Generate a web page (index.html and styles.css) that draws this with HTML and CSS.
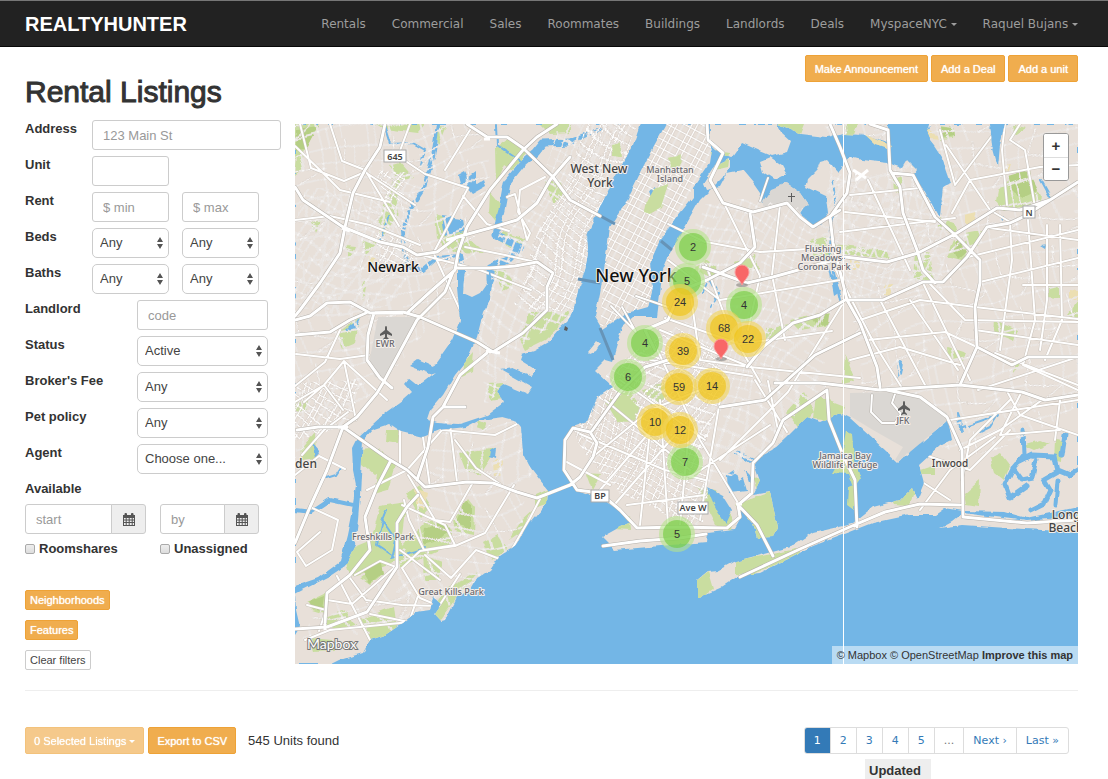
FILE: index.html
```html
<!DOCTYPE html>
<html lang="en">
<head>
<meta charset="utf-8">
<title>Rental Listings | RealtyHunter</title>
<link rel="stylesheet" href="styles.css">
</head>
<body>
<header class="navbar">
  <a class="brand" href="#">REALTYHUNTER</a>
  <nav class="nav">
    <a href="#">Rentals</a>
    <a href="#">Commercial</a>
    <a href="#">Sales</a>
    <a href="#">Roommates</a>
    <a href="#">Buildings</a>
    <a href="#">Landlords</a>
    <a href="#">Deals</a>
    <a href="#">MyspaceNYC <span class="caret"></span></a>
    <a href="#">Raquel Bujans <span class="caret"></span></a>
  </nav>
</header>

<main class="page">
  <div class="page-head">
    <h1>Rental Listings</h1>
    <div class="actions">
      <button class="btn" type="button">Make Announcement</button>
      <button class="btn" type="button">Add a Deal</button>
      <button class="btn" type="button">Add a unit</button>
    </div>
  </div>

  <div class="content">
    <form class="filters">
      <div class="row"><label for="address">Address</label><input class="field wide" id="address" type="text" placeholder="123 Main St"></div>
      <div class="row"><label for="unit">Unit</label><input class="field" id="unit" type="text"></div>
      <div class="row"><label for="rent-min">Rent</label><input class="field" id="rent-min" type="text" placeholder="$ min"><input class="field" type="text" placeholder="$ max" aria-label="Maximum rent"></div>
      <div class="row"><label for="beds">Beds</label><select class="field" id="beds"><option>Any</option></select><select class="field" aria-label="Maximum beds"><option>Any</option></select></div>
      <div class="row"><label for="baths">Baths</label><select class="field" id="baths"><option>Any</option></select><select class="field" aria-label="Maximum baths"><option>Any</option></select></div>
      <div class="row long"><label for="landlord">Landlord</label><input class="field" id="landlord" type="text" placeholder="code"></div>
      <div class="row long"><label for="status">Status</label><select class="field" id="status"><option>Active</option></select></div>
      <div class="row long"><label for="fee">Broker's Fee</label><select class="field" id="fee"><option>Any</option></select></div>
      <div class="row long"><label for="pets">Pet policy</label><select class="field" id="pets"><option>Any</option></select></div>
      <div class="row long"><label for="agent">Agent</label><select class="field" id="agent"><option>Choose one...</option></select></div>
      <div class="row"><label for="start">Available</label></div>
      <div class="dates">
        <div class="date">
          <input class="field" id="start" type="text" placeholder="start">
          <button class="addon" type="button" aria-label="Pick start date"><svg width="12" height="13" viewBox="0 0 12 13"><path fill="#555" fill-rule="evenodd" d="M0 2h1.500V1c0-1.300 2.500-1.300 2.500 0v1h4V1c0-1.300 2.500-1.300 2.500 0v1H12v11H0zM1 5v1.500h1.700V5zm2.700 0v1.500h2V5zm3 0v1.500h2V5zm3 0v1.500H11V5zM1 7.500V9h1.700V7.500zm2.700 0V9h2V7.500zm3 0V9h2V7.500zm3 0V9H11V7.500zM1 10v2h1.700v-2zm2.700 0v2h2v-2zm3 0v2h2v-2zm3 0v2H11v-2z"/></svg></button>
        </div>
        <div class="date">
          <input class="field" type="text" placeholder="by" aria-label="Available by">
          <button class="addon" type="button" aria-label="Pick end date"><svg width="12" height="13" viewBox="0 0 12 13"><path fill="#555" fill-rule="evenodd" d="M0 2h1.500V1c0-1.300 2.500-1.300 2.500 0v1h4V1c0-1.300 2.500-1.300 2.500 0v1H12v11H0zM1 5v1.500h1.700V5zm2.700 0v1.500h2V5zm3 0v1.500h2V5zm3 0v1.500H11V5zM1 7.500V9h1.700V7.500zm2.700 0V9h2V7.500zm3 0V9h2V7.500zm3 0V9H11V7.500zM1 10v2h1.700v-2zm2.700 0v2h2v-2zm3 0v2h2v-2zm3 0v2H11v-2z"/></svg></button>
        </div>
        <label class="check"><input type="checkbox">Roomshares</label>
        <label class="check"><input type="checkbox">Unassigned</label>
      </div>
      <div class="filter-buttons">
        <button class="btn small" type="button">Neighborhoods</button>
        <button class="btn small" type="button">Features</button>
        <button class="btn small plain" type="reset">Clear filters</button>
      </div>
    </form>

    <section class="map" aria-label="Map of listings">
      <svg class="map-canvas" viewBox="295 124 783 540" preserveAspectRatio="xMidYMid slice">
        <defs>
          <path id="land" d="M295 124H640L633 145 628 153 610 187 597 213 587 233 588 253 585 270 578 290 573 312 567 322 558 330 548 342 534 350 522 354 520 360 536 370 532 376 512 368 500 370 532 388 528 394 504 384 497 390 503 403 487 415 460 424 437 423 428 420 432 408 443 395 455 375 467 360 477 337 483 313 490 300 492 285 490 268 487 283 480 293 472 297 463 293 465 267 457 267 457 287 460 320 452 340 433 367 418 360 410 366 430 374 436 372 418 386 408 378 404 383 412 392 403 400 385 413 372 425 356 440 352 448 353 470 356 485 352 510 347 535 340 562 318 578 295 586ZM363 440L372 430 390 424 402 432 423 437 440 430 467 427 480 420 503 417 514 420 521 428 523 453 530 467 540 480 548 490 547 503 530 523 516 545 500 556 490 570 477 578 470 590 457 597 453 605 445 620 440 621 434 614 441 604 433 597 430 610 416 612 403 623 385 635 370 640 363 653 356 655 340 660 332 664H295V635L300 627 296 610 295 594 330 576 345 566 355 545 358 520 360 495Z
          M666 124L650 153 627 200 610 227 605 263 600 293 595 317 602 329 627 313 648 307 653 287 650 263 660 240 677 217 693 197 693 188 710 163 712 150 707 137 705 124Z
          M708 124L710 145 716 151 732 157 742 143 760 151 772 156 787 152 791 141 780 131 776 124ZM730 158L714 166 703 183 706 190 720 187 730 168ZM760 161L770 157 782 165 787 174 775 180 763 172ZM777 124L800 134 826 137 845 134 865 135 888 142 888 124Z
          M700 200L716 184 727 173 742 170 753 183 760 193 763 203 770 203 785 183 800 193 807 203 800 213 813 227 823 224 829 214 827 197 806 187 808 179 817 170 820 162 827 160 838 172 850 157 862 160 887 163 902 168 907 160 917 170 913 176 925 192 937 213 940 217 943 187 951 183 942 157 934 145 930 140 928 124H990L992 145 998 167 1000 145 1005 124H1078V507L1027 518 1005 512 963 511 945 508 935 515 910 515 873 523 850 532 813 546 790 558 760 573 740 575 720 588 697 598V580L707 572 717 571 733 562 760 555 790 547 813 532 830 528 853 523 873 507 900 500 912 488 917 500 924 483 919 465 940 446 952 440 948 420 898 462 850 418 840 413 820 422 807 417 787 437 773 450 753 460 760 480 753 495 770 492 778 527 773 537 757 538 753 523 738 505 740 517 733 530 708 533 707 542 660 546 615 550 602 537 620 527 630 523 620 510 605 500 577 490 564 470 565 440 573 427 587 422 593 407 598 397 613 387 595 370 605 360 612 362 622 327 633 317 657 317 660 293 663 270 670 253 683 230Z
          M963 513L953 521 940 528 962 525 1007 528 1078 532V516L1027 521ZM587 352L597 340 601 343 596 351 589 354Z"/>
          <clipPath id="on-land"><use href="#land"/></clipPath>
          <filter id="coast" x="0" y="0" width="1" height="1"><feTurbulence type="fractalNoise" baseFrequency=".09" numOctaves="2" seed="4"/><feDisplacementMap in="SourceGraphic" scale="5" xChannelSelector="R" yChannelSelector="G"/><feGaussianBlur stdDeviation=".4"/></filter>
          <filter id="bend" x="-.1" y="-.1" width="1.200" height="1.200"><feTurbulence type="fractalNoise" baseFrequency=".011" numOctaves="1" seed="9"/><feDisplacementMap in="SourceGraphic" scale="60" xChannelSelector="R" yChannelSelector="G"/></filter>
          <path id="loose-net" fill="none" d="M0 8H62M0 24H38L62 30M0 30L12 30M0 43H62M9 0V54M25 8V43M40 0L36 24V54M52 8V29M18 43V54M18 0V8M48 43L62 36M0 36L9 30"/>
          <path id="mesh-net" fill="none" d="M0 6H26M0 17H26M0 27H18M5 0V32M13 6V27M20 0V32"/>
          <path id="grid-net" fill="none" d="M0 4.500H18M0 12.500H18M3.500 0V16M8.500 0V16M14 0V16"/>
          <pattern id="loose" width="62" height="54" patternUnits="userSpaceOnUse" patternTransform="rotate(-14)"><use href="#loose-net" class="net-case"/><use href="#loose-net" class="net-line"/></pattern>
          <pattern id="mesh" width="26" height="32" patternUnits="userSpaceOnUse" patternTransform="rotate(22)"><use href="#mesh-net" class="net-case"/><use href="#mesh-net" class="net-line"/></pattern>
          <pattern id="grid" width="18" height="16" patternUnits="userSpaceOnUse" patternTransform="rotate(28)"><use href="#grid-net" class="net-case"/><use href="#grid-net" class="net-line"/></pattern>
          <path id="roads" d="M557 124L537 137 523 150 490 190 467 227 458 253 455 270 430 292 407 313M453 272L445 292 417 320 383 383 377 393 357 417 343 427 327 470 310 507 295 543M295 320L310 316 327 303 350 302 370 313 403 312 420 317 477 342 493 352 523 333 547 310V287L553 273 537 262 515 266 490 268 455 268M295 187L303 200 343 227 380 242 403 247 417 255 437 252 457 237 490 228 517 220 537 203 550 180 570 157M385 124L380 147 365 170 353 193 345 227 340 253 320 283 300 310 295 316M467 124L487 137 507 137 523 148 553 177 570 200 600 216M295 335L330 332 350 320 366 313M374 313L368 335 367 360 380 378 392 388
          M295 629L327 627 367 612 397 567M397 567V523L407 507 418 495M325 623L327 593 350 575 370 550 365 517 377 487 390 462M343 427L387 458 407 470 425 487 467 482 493 483 517 492 537 498 570 485 580 477 593 457 597 443 590 432 573 428 565 440 564 470 577 490 600 493 620 510 637 528 677 527 727 528 740 517 738 505 752 493 753 463 773 443 783 420 827 390M417 480L428 447 433 417 443 407 460 375 487 353M443 407H465
          M297 430L318 427 343 427M592 431L620 392 645 367 668 360M707 124L708 140 723 153 710 180 723 203 753 212 787 203 800 217 813 227 840 210M750 213L755 247 740 263 707 280 680 291 668 320 645 330 655 350M703 267L747 283 773 277 845 257 887 262 918 253 957 233 997 208 1020 210 1050 200 1078 182M747 367L763 347 793 323 820 315 845 300 883 300 923 282 943 282 967 257 987 227 1010 223 1023 217 1050 200M830 124L840 147 850 173 847 193 830 217 833 243 847 300 860 323 877 367 880 387M870 124L888 130 890 170 900 187 903 213 917 250 923 270 935 283M892 173L913 175 935 217 953 233 980 260V283L975 307 977 347 960 385M977 347L1012 365 1028 357H1078M775 383L820 383 880 390 960 385 1022 392 1045 400 1078 395M887 390L920 397 947 417 962 450 963 517 1027 523 1078 520M827 390L829 420 843 455 855 480 857 527M740 577L800 549 852 526 885 512 920 504 960 505M738 505L757 525 773 556M603 546L640 541 680 538 706 534M720 407L765 400 815 355 860 333"/>
          <path id="streets" d="M295 146L320 170 340 190 390 202M295 220L330 216 370 225 420 245M300 124L311 168 344 181 365 172 415 205M330 124L342 161 365 170 399 226M410 124L398 156 425 174 468 188 435 250M445 170L470 130M463 196L487 224 509 231M507 197L515 194 527 240 530 233 518 212 520 190 545 177M418 254L480 270 531 290M465 247L505 255 540 263M434 254L460 310M296 354L340 359 369 355M295 386L325 362 340 330M295 402L324 385 344 361 387 400M304 402L324 385 343 410M344 361L356 420M302 455L324 430 348 412M295 475L319 456 345 469M310 507L338 520 332 550 306 566 297 552 320 532
          M367 490L407 470 442 430 495 435 517 424M400 430V464L418 480M423 437L430 487M450 425L457 482M455 440L476 468 500 484M408 475L435 520 450 522 464 498 472 484M402 505L445 525 455 545 424 550 409 520 404 500M402 568L420 551 455 546 485 533 505 500 514 485M425 555L451 578 476 550 505 561 530 518 540 499M402 568L420 598 439 606 460 574M400 550L440 580M350 578L366 600 402 605 439 606M327 600L352 604 395 567M355 575L380 561 396 567M337 576L370 640M305 640L330 630 410 622M319 631L326 610 307 605M370 614L409 622 420 590
          M725 205L760 276 748 330M780 205L772 275 785 340M695 240L760 252 840 247M706 265L730 330 760 382M668 260L720 300 840 280M690 290L700 360 750 367M665 318L740 344 832 331M660 330L750 367 860 378M650 360L752 376M655 345L700 440 738 503M620 380L705 440M605 400L690 470M580 434L665 470 705 480M563 460L610 485M595 455L650 410 700 390M627 505L705 495M600 490L660 420M615 504L675 435M640 525L650 430M680 525L690 420M700 520L720 400M668 525L660 400M720 460L788 392 820 340 842 305M690 477L770 425M755 380L787 432M768 381L778 430
          M850 195L930 187M845 212L935 222M840 232L955 218M868 180L910 270M955 185L1000 125M955 185L940 130M946 145L990 210 1010 222M952 213L970 180 1040 167 1078 165M1005 124L1002 150 1007 205M1035 207L1025 150 1010 140 1020 124M990 228L1078 240M968 257L1078 230M980 282L1078 258M975 307L1078 319M930 284L965 320 1078 322M860 320L920 300 975 307M868 340L945 332 977 347M835 268L875 345 902 388M880 300L925 385M910 300L958 370M924 285L970 380M850 360L900 347 960 365M975 330L1078 345M1010 223L1012 260 1000 350M1028 220L1035 320 1023 365M1060 225L1062 320 1045 360M1023 285H1078M1047 225V300L1040 350M1023 365L1078 390M995 353L1078 385M978 390L1078 357M1010 400L970 440 962 480M1020 395L1000 435 1060 430M950 420L1078 400M960 450L1000 430 1042 400M925 455L970 470 1010 430M920 510L950 470 995 437M916 478L950 500M1008 393L1020 415 1078 435M1060 400L1055 440"/>
        </defs>

        <rect class="water" x="295" y="124" width="783" height="540"/>
        <g filter="url(#coast)">
          <rect class="water" x="295" y="124" width="783" height="540"/>
          <use href="#land" fill="#e8e0d9"/>
          <g class="park" clip-path="url(#on-land)">
            <path d="M295 124H318L304 153 295 158ZM298 147L305 154 301 170 295 175ZM393 176L401 173 397 218 380 240 378 225ZM390 165L400 162 414 178 400 180ZM436 124L446 126 438 145ZM435 215L462 222 467 238 446 250 437 237ZM495 148L510 138 527 153 512 170 505 165 496 185ZM490 192L505 210 500 225 489 212ZM503 232L527 240 515 250 498 240ZM493 272L505 270 515 284 503 291ZM449 247L470 240 485 253 456 252ZM337 334L360 317 355 343 343 348ZM530 312L570 312 560 326 545 340 525 350 520 340ZM362 240L377 241 365 257ZM311 222L322 218 315 234ZM463 364L474 352 472 372 462 377ZM375 124H425L418 133 385 129ZM540 124H570V133L550 134ZM545 182L560 180 565 195 553 205ZM345 245L356 246 350 260ZM361 287L367 279 364 301ZM295 402L309 397 308 410 296 413ZM300 450L315 432 316 458 302 460ZM487 384L504 383 503 398 490 400Z"/>
            <path d="M360 450L380 448 393 465 375 475 362 464ZM387 430L399 430 397 443 386 441ZM371 540L380 506 407 502 400 560 351 577 342 552ZM400 548L426 521 440 520 452 531 450 546 400 568ZM453 521L468 499 475 508 474 535 455 531ZM406 493L420 486 432 505 420 518ZM459 453L476 450 497 449 480 475 465 469ZM423 555L442 562 437 580 425 580ZM508 540L520 522 533 510 524 529ZM483 542L497 534 507 549 492 561ZM437 602L447 587 479 571 457 597 440 620 432 616ZM361 577L377 565 383 574 371 584ZM307 602L328 592 325 614 312 610ZM360 620L394 606 397 630 372 648ZM320 619L346 610 356 626 335 630ZM310 638L332 640 335 650 314 651ZM478 420L487 424 485 431 476 428ZM535 495L548 489 547 503 535 507ZM380 455L396 462 388 490 374 494Z"/>
            <path d="M612 145L620 142 622 157 612 156ZM645 206L654 189 668 184 661 207 650 214 644 212ZM668 158L682 155 680 165 671 168ZM710 150L730 153 728 168 715 171ZM776 124H804L797 142 785 132ZM843 124H858L850 145ZM735 262L755 254 758 268 739 275ZM766 328L790 324 783 338 766 343ZM790 320L830 312 826 326 800 330ZM810 241L827 236 832 257 814 260ZM833 244L886 250 890 259 842 254ZM892 180L902 176 900 193 893 190ZM940 125L955 128 953 139 940 140ZM915 250L930 253 934 282 913 280ZM953 240L966 250 965 262 946 257ZM935 216L955 224 957 235 940 228ZM998 190L1018 174 1041 193 1040 204 1004 210 996 201ZM965 233L981 230 979 245 965 250ZM1010 124L1026 128 1015 135ZM1048 286H1059V298L1048 297ZM1067 314L1078 300V317L1070 319ZM995 320L1018 330 1014 342 994 334ZM947 347L966 353 962 361 948 357Z"/>
            <path d="M605 402L628 390 641 406 635 423 618 422ZM643 390L665 382 668 397 651 406ZM586 474L600 475 592 490ZM697 487L715 490 733 516 730 531 716 525ZM735 505L770 492 779 528 773 540 755 538 754 526ZM752 478L762 477 758 492ZM614 529L629 515 631 530ZM697 580L708 572 713 589 697 600ZM736 560L773 554 800 548 800 555 750 575 736 574ZM786 412L804 392 814 412 800 430ZM816 395L845 406 840 422 813 419ZM890 497L905 485 916 484 910 505 894 504ZM920 470L935 465 935 474 920 474ZM990 458L1000 453 1010 466 1004 480 994 472ZM964 494L980 480 979 507 966 505ZM1023 445L1040 440 1050 444 1035 450ZM1055 440L1063 441 1062 462 1054 460ZM693 268L707 261 718 269 713 280ZM845 355L843 385 855 382ZM1024 360L1012 374 1017 362Z"/>
          </g>
          <path class="wood" d="M297 129L318 126 305 150 296 151ZM362 570L381 562 383 573 370 583ZM308 602L324 596 322 610 311 608ZM425 528L440 521 449 530 438 541 422 545ZM455 524L465 501 471 505 471 528ZM940 126L954 127 955 136 944 138ZM1008 176L1028 170 1038 190 1023 197 1010 190ZM957 237L967 252 958 260 954 251ZM812 319L829 313 828 324 817 327Z" clip-path="url(#on-land)"/>
          <path class="sand" d="M415 488L428 493 425 509 416 505ZM368 254L377 257 372 268ZM884 286L893 285 890 294 884 295ZM850 258L861 261 859 272 851 269ZM926 129L942 139 930 138ZM493 462L502 460 501 476 494 475ZM965 213L976 212 973 224 965 224ZM1070 290L1078 291V300L1070 297ZM862 132L892 146 890 149 875 144ZM1002 166L1011 164 1008 172Z"/>
          <path class="airport" d="M763 201L771 189 786 183 800 193 808 205 800 212 788 203 765 208Z"/>
          <path class="river" stroke-width="4" d="M438 124L433 157 423 190 410 210 403 230 405 257 411 268 423 270 437 258 460 256 463 272M571 140L600 129M708 124V140M295 510L312 512 330 500 353 505"/>
          <path class="river" stroke-width="7" d="M572 142L543 143 535 153 523 163 507 183 502 210 495 235 510 242 520 247 507 260 490 268V280"/>
          <path class="river" stroke-width="2" d="M496 125L497 145 523 163M384 125L390 144 413 143 425 150 421 165M378 245L389 215M386 510L382 520 396 540 392 558 425 548M383 520L377 545 392 555M703 294L710 278 718 293 711 306M833 180L836 210 830 226 829 250 840 300M320 480L336 475 341 467M1041 180L1052 200M980 433L990 428 998 415 960 428M963 432L957 414 958 425 961 430"/>
          <path class="water" d="M458 176L465 172 468 178 476 172 476 185 484 180 486 186 472 194 466 187 460 184ZM442 216L462 219 464 232 445 236ZM351 325L361 318 356 329 344 332ZM649 192L655 187 657 198 651 198ZM616 148L621 151 617 156ZM491 452L497 448 496 459 490 457ZM829 268L836 280 840 291 834 295ZM1000 218L1003 214 1002 220ZM727 475L735 470 738 480 743 477 747 491 728 493ZM745 470L752 477V490ZM707 487L722 495 732 511 726 524 718 512 712 500ZM725 446L754 459 750 463ZM1041 245L1048 244 1046 248ZM898 360L903 362 901 374 897 378ZM312 443L320 452 315 458Z"/>
          <path class="river" stroke-width="5" d="M1023 430L1024 455 1014 467 1005 485 1010 498 1027 486M1018 462L1032 455 1055 456 1058 472 1044 480 1050 490 1044 503 1030 510M1058 470L1070 475 1078 470M1065 435L1062 455M1058 480L1056 505M1013 468L1022 480 1032 478 1036 460"/>
          <path class="park" d="M846 430L852 433 854 458 861 480 854 490 848 474 832 473 842 455ZM848 488L856 485 854 510 847 505Z"/>
        </g>

        <g clip-path="url(#on-land)">
          <g filter="url(#bend)">
            <path fill="url(#loose)" d="M250 80H480L490 260 440 330 300 460 250 420ZM820 90H1110V390L1000 450 940 440 850 390ZM430 420H560L470 620 310 640 330 600 420 560Z"/>
            <path fill="url(#mesh)" d="M295 200H420L390 310H295ZM400 160L430 170 400 230 380 225ZM700 200H830L820 385 745 460 700 490 670 300ZM830 180H960L930 290 840 300ZM560 124H640L570 320 530 340 470 400 490 310Z"/>
            <path fill="url(#grid)" d="M660 320L730 350 700 530 620 510 560 430ZM600 110L650 120 580 310 520 310ZM370 235L410 240 400 275 370 265ZM380 164L410 160 410 190 390 200ZM285 385L360 380 350 420 285 450Z"/>
          </g>
          <path fill="url(#grid)" d="M666 124H706L712 150 693 188 653 255 655 300 600 327 605 263 610 227Z"/>
          <g class="park"><path d="M645 206L654 189 668 184 661 207 650 214 644 212ZM612 145L620 143 621 157 613 156ZM670 158L681 155 680 166 671 170ZM606 403L625 393 638 407 632 421 618 422Z"/></g>
          <use href="#streets" class="street-case"/>
          <use href="#streets" class="street-line"/>
          <path class="airport" d="M378 317H417L387 380 375 377 369 363ZM850 393L890 392 920 397 947 413 950 437 923 453 920 463 907 453 899 463 895 460 903 447 873 430 850 416Z"/>
        </g>
        <path fill="none" stroke="#6694b8" stroke-width="3" d="M595 213L615 224M578 279L600 283M600 328L613 360M661 241L672 250"/>
        <path class="road-case thin" d="M636 296L668 307M611 306L636 332M622 307L636 332M668 224L705 242M760 201L768 178M872 395L871 412 882 423 895 423M895 394L892 403 901 414 895 423"/>
        <path class="road-line thin" d="M636 296L668 307M611 306L636 332M622 307L636 332M668 224L705 242M760 201L768 178M872 395L871 412 882 423 895 423M895 394L892 403 901 414 895 423"/>
        <use href="#roads" class="road-case"/>
        <use href="#roads" class="road-line"/>
        <path fill="none" stroke="#fff" stroke-width="3" d="M484 139L490 139M342 228L350 231M375 313H403M446 240L462 236M486 351L500 353M325 624V630M338 427H348M736 504H742M853 170L866 178M856 180L868 170"/>

        <g class="shield"><rect x="384" y="150" width="22" height="12"/><rect x="1023" y="206" width="12" height="12"/><rect x="591" y="490" width="18" height="12"/><rect x="678" y="502" width="30" height="12"/></g>
        <g class="shield-text"><text x="395" y="160">645</text><text x="1029" y="216">N</text><text x="600" y="499">BP</text><text x="693" y="511">Ave W</text></g>
        <g fill="#5c5c5c"><path id="plane" d="M386 326c1 0 1 1 1 4l5 4v2l-5-2v3l2 2v1l-3-1-3 1v-1l2-2v-3l-5 2v-2l5-4c0-3 0-4 1-4z"/><use href="#plane" x="518" y="75"/><path d="M791 193h1v3h3v1h-3v5h-1v-5h-3v-1h3zM565 326l3 2-1 3-3-1z"/></g>

        <g class="place">
          <text class="city" x="393" y="272">Newark</text>
          <text class="metro" x="636" y="282">New York</text>
          <text class="town" x="599" y="173">West New</text><text class="town" x="600" y="187">York</text>
          <text class="small-town" x="950" y="467">Inwood</text>
          <text class="town" x="306" y="468">den</text>
          <text class="town" x="1066" y="519">Long</text><text class="town" x="1066" y="532">Beach</text>
          <g class="minor"><text x="670" y="173">Manhattan</text><text x="670" y="182">Island</text><text x="823" y="252">Flushing</text><text x="823" y="261">Meadows-</text><text x="824" y="270">Corona Park</text><text x="383" y="540">Freshkills Park</text><text x="451" y="595">Great Kills Park</text><text x="845" y="459">Jamaica Bay</text><text x="845" y="468">Wildlife Refuge</text><text x="385" y="347">EWR</text><text x="903" y="424">JFK</text></g>
        </g>
        <path stroke="#fff" d="M843.500 124V664"/>

        <g class="cluster green"><circle cx="693" cy="247" r="18"/><circle cx="693" cy="247" r="14"/><circle cx="687" cy="281" r="18"/><circle cx="687" cy="281" r="14"/><circle cx="744" cy="305" r="18"/><circle cx="744" cy="305" r="14"/><circle cx="645" cy="343" r="18"/><circle cx="645" cy="343" r="14"/><circle cx="628" cy="377" r="18"/><circle cx="628" cy="377" r="14"/><circle cx="685" cy="462" r="18"/><circle cx="685" cy="462" r="14"/><circle cx="677" cy="534" r="18"/><circle cx="677" cy="534" r="14"/></g>
        <g class="cluster yellow"><circle cx="680" cy="302" r="18"/><circle cx="680" cy="302" r="14"/><circle cx="724" cy="328" r="18"/><circle cx="724" cy="328" r="14"/><circle cx="748" cy="339" r="18"/><circle cx="748" cy="339" r="14"/><circle cx="683" cy="351" r="18"/><circle cx="683" cy="351" r="14"/><circle cx="679" cy="387" r="18"/><circle cx="679" cy="387" r="14"/><circle cx="712" cy="386" r="18"/><circle cx="712" cy="386" r="14"/><circle cx="655" cy="422" r="18"/><circle cx="655" cy="422" r="14"/><circle cx="680" cy="430" r="18"/><circle cx="680" cy="430" r="14"/></g>
        <g class="count"><text x="693" y="251">2</text><text x="687" y="285">5</text><text x="680" y="306">24</text><text x="744" y="309">4</text><text x="724" y="332">68</text><text x="748" y="343">22</text><text x="645" y="347">4</text><text x="683" y="355">39</text><text x="628" y="381">6</text><text x="679" y="391">59</text><text x="712" y="390">14</text><text x="655" y="426">10</text><text x="680" y="434">12</text><text x="685" y="466">7</text><text x="677" y="538">5</text></g>
        <g id="pin"><ellipse cx="742" cy="285" rx="6" ry="2" fill="#555" opacity=".4"/><path d="M742 285c-2-5-7-8-7-13a7 7 0 0 1 14 0c0 5-5 8-7 13z" fill="#f86767" stroke="#fa9d9d"/></g>
        <use href="#pin" x="-21" y="74"/>
        <text class="logo" x="307" y="649">Mapbox</text>
      </svg>
      <div class="zoom"><button type="button" aria-label="Zoom in">+</button><button type="button" aria-label="Zoom out">−</button></div>
      <div class="credit"><a href="#">© Mapbox</a> <a href="#">© OpenStreetMap</a> <a href="#"><b>Improve this map</b></a></div>
    </section>
  </div>

  <hr>

  <div class="toolbar">
    <button class="btn" type="button" disabled>0 Selected Listings <span class="caret"></span></button>
    <button class="btn" type="button">Export to CSV</button>
    <span class="found">545 Units found</span>
    <nav class="pages" aria-label="Pages">
      <a class="current" href="#">1</a><a href="#">2</a><a href="#">3</a><a href="#">4</a><a href="#">5</a><span>...</span><a href="#">Next ›</a><a href="#">Last »</a>
    </nav>
  </div>
  <table class="listings"><thead><tr><th scope="col">Updated</th></tr></thead></table>
</main>
</body>
</html>
```
FILE: styles.css
```css
* { box-sizing: border-box; }
body { margin: 0; background: #fff; color: #333; font: 13px/18px "Liberation Sans", Arial, sans-serif; }
a { text-decoration: none; }

.navbar { display: flex; align-items: center; justify-content: space-between; height: 47px; padding: 0 30px 0 25px; background: #222; border-top: 1px solid #777; border-bottom: 1px solid #080808; }
.brand { color: #fff; font-size: 20px; font-weight: 700; }
.nav { display: flex; gap: 26px; font: 12px/18px "DejaVu Sans", Verdana, sans-serif; }
.nav a { color: #9d9d9d; white-space: nowrap; }
.caret { display: inline-block; vertical-align: middle; border: 3px solid transparent; border-top-color: currentColor; border-bottom: 0; }

.page { padding: 8px 30px 0 25px; }
.page-head { display: flex; justify-content: space-between; align-items: flex-start; }
h1 { margin: 20px 0 11px; font-size: 30px; line-height: 34px; font-weight: 400; -webkit-text-stroke: 1px #333; }
.actions { display: flex; gap: 3px; }
.btn { height: 27px; padding: 0 9px; border: 1px solid #eea236; border-radius: 2px; background: #f0ad4e; color: #fff; font: 11px/16px "Liberation Sans", Arial, sans-serif; text-shadow: 0 0 1px #fff; white-space: nowrap; }
.btn:disabled { opacity: .65; }
.btn.small { height: 20px; padding: 0 4px; }
.btn.plain { background: #fff; border-color: #ccc; color: #444; text-shadow: none; }

.content { display: grid; grid-template-columns: 256px 1fr; gap: 14px; }
.filters { display: flex; flex-direction: column; gap: 6px; }
.filters label { font-weight: 700; }
.row { display: grid; grid-template-columns: 54px 77px 77px; gap: 13px; height: 30px; }
.row.long { grid-template-columns: 99px 131px; }
.row label { white-space: nowrap; }
.field { width: 100%; min-width: 0; height: 30px; padding: 0 10px; border: 1px solid #ccc; border-radius: 3px; background: #fff; color: #444; font: 13px/18px "Liberation Sans", Arial, sans-serif; }
.field.wide { grid-column: 2 / span 2; width: 189px; }
.field::placeholder { color: #999; opacity: 1; }
select.field { appearance: none; padding: 0 7px; border-radius: 5px; background: #fff url("data:image/svg+xml,%3Csvg xmlns='http://www.w3.org/2000/svg' width='6' height='12'%3E%3Cpath fill='%23555' d='M0 5L3 0 6 5zM0 7h6L3 12z'/%3E%3C/svg%3E") no-repeat right 5px center; }
.dates { display: grid; grid-template-columns: 121px 99px; column-gap: 14px; row-gap: 6px; margin-top: -12px; }
.date { display: flex; }
.date .field { flex: 1; border-radius: 3px 0 0 3px; }
.addon { display: flex; align-items: center; justify-content: center; width: 35px; height: 30px; margin-left: -1px; padding: 0; border: 1px solid #ccc; border-radius: 0 3px 3px 0; background: #eee; }
.check { display: flex; align-items: center; gap: 4px; }
.check input { appearance: none; width: 10px; height: 10px; margin: 0; border: 1px solid #aaa; border-radius: 2px; background: linear-gradient(#eee, #ddd); }
.filter-buttons { display: flex; flex-direction: column; align-items: flex-start; gap: 10px; margin-top: 26px; }

.map { position: relative; height: 540px; margin-top: 4px; overflow: hidden; background: #73b6e6; }
.map-canvas { display: block; width: 100%; height: 100%; font-family: "Noto Sans", sans-serif; text-anchor: middle; }
.water { fill: #73b6e6; }
.park { fill: #c9dda0; }
.wood { fill: #b5cf84; }
.sand { fill: #ecdfb2; }
.airport { fill: #dad7d3; }
.river { fill: none; stroke: #73b6e6; stroke-linejoin: round; stroke-linecap: round; }
.net-case { stroke: #d6cec7; stroke-width: 2px; }
.net-line { stroke: #fff; stroke-width: 1px; }
.street-case, .street-line, .road-case, .road-line { fill: none; stroke-linejoin: round; stroke-linecap: round; }
.street-case { stroke: #cbc4bc; stroke-width: 3px; }
.street-line { stroke: #fff; stroke-width: 2px; }
.road-case { stroke: #b5b0aa; stroke-width: 4px; }
.road-line { stroke: #fff; stroke-width: 3px; }
.road-case.thin { stroke-width: 3px; }
.road-line.thin { stroke-width: 2px; }
.shield rect { fill: #fff; stroke: #aaa; }
.shield-text { fill: #444; font-size: 9px; font-weight: 600; }
.place { fill: #444; stroke: #f4efea; stroke-width: 2px; stroke-linejoin: round; paint-order: stroke; font-weight: 500; }
.metro { fill: #111; font-size: 18px; }
.city { fill: #111; font-size: 14px; }
.town { font-size: 12px; }
.small-town { font-size: 10px; }
.minor { fill: #68686f; font-size: 9px; }
.green circle { fill: #6ecc39; opacity: .6; }
.green circle:nth-child(odd) { fill: #b5e28c; }
.yellow circle { fill: #f0c20c; opacity: .6; }
.yellow circle:nth-child(odd) { fill: #f1d357; }
.count { fill: #333; font: 11px "Liberation Sans", Arial, sans-serif; }
.logo { text-anchor: start; fill: #fff; stroke: #777; stroke-width: 2px; paint-order: stroke; font: 14px Lato, sans-serif; }
.zoom { position: absolute; top: 9px; right: 9px; display: flex; flex-direction: column; width: 26px; border: 1px solid #999; border-radius: 3px; background: #fff; overflow: hidden; }
.zoom button { height: 23px; padding: 0; border: 0; background: #fff; color: #333; font: 700 15px/22px "Liberation Sans", Arial, sans-serif; }
.zoom button + button { border-top: 1px solid #ddd; }
.credit { position: absolute; right: 0; bottom: 0; padding: 0 5px; background: rgba(255, 255, 255, .5); font-size: 11px; line-height: 18px; }
.credit a { color: #333; }

hr { margin: 20px 0 36px; border: 0; border-top: 1px solid #eee; }
.toolbar { display: flex; align-items: center; gap: 4px; padding-right: 9px; }
.toolbar .btn { padding: 0 8px; }
.found { margin-left: 8px; }
.pages { display: flex; margin-left: auto; border: 1px solid #ddd; border-radius: 3px; font: 11px/25px "DejaVu Sans", Verdana, sans-serif; overflow: hidden; }
.pages > * { padding: 0 9px; color: #337ab7; }
.pages > * + * { border-left: 1px solid #ddd; }
.pages span { color: #777; }
.pages .current { background: #337ab7; color: #fff; }
.listings { margin: 5px 147px 0 auto; border-collapse: collapse; }
.listings th { width: 66px; height: 20px; padding: 4px 4px 0; background: #eee; text-align: left; font-size: 13px; line-height: 16px; }
```
